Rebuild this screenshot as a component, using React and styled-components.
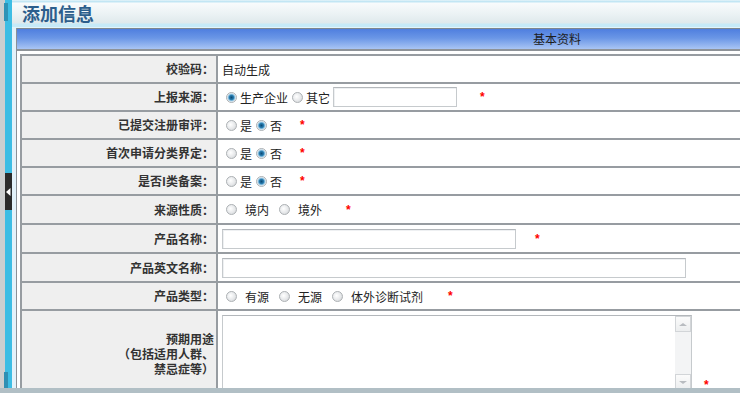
import React from 'react';
import styled, { createGlobalStyle } from 'styled-components';

const GlobalStyle = createGlobalStyle`
  html, body {
    margin: 0;
    padding: 0;
    overflow: hidden;
    background: #ffffff;
  }
  body {
    font-family: "Noto Sans CJK SC", "Liberation Sans", sans-serif;
    font-size: 12px;
    color: #222222;
  }
`;

const Frame = styled.div`
  display: flex;
  flex-direction: column;
  width: 740px;
  height: 393px;
  overflow: hidden;
`;

const Workspace = styled.div`
  flex: 1;
  display: flex;
  min-height: 0;
  overflow: hidden;
`;

const SideRail = styled.div`
  flex: none;
  width: 12px;
  display: flex;
  flex-direction: column;
  align-items: flex-end;
  background:
    linear-gradient(#2f93b6, #2f93b6) 4px 3px / 4px 18px no-repeat,
    linear-gradient(#2f8fb3, #2f8fb3) 4px 372px / 4px 16px no-repeat,
    linear-gradient(to right, #cdcfd0 0 5px, #3dbde4 5px 12px);
`;

const RailToggle = styled.button`
  margin-top: 173px;
  width: 7px;
  height: 37px;
  padding: 0;
  border: none;
  background: #2b2b2b;
  display: flex;
  align-items: center;
  justify-content: center;
  cursor: pointer;
`;

const Main = styled.div`
  flex: none;
  width: 1085px;
  display: flex;
  flex-direction: column;
`;

const TitleBar = styled.div`
  height: 28px;
  flex: none;
  display: flex;
  align-items: center;
  padding: 0 0 2px 10px;
  box-sizing: border-box;
  background: linear-gradient(
    to bottom,
    #f2f9fb 0,
    #c2e6f4 1px,
    #c2e6f4 2px,
    #f8fbfc 3px,
    #ebf2f4 14px,
    #dfe9ec 23px,
    #c6eaf8 24px,
    #c6eaf8 27px,
    #ffffff 28px
  );
`;

const Title = styled.h1`
  margin: 0;
  font-size: 18px;
  font-weight: bold;
  color: #2c5e8c;
  line-height: 20px;
`;

const Content = styled.div`
  flex: 1;
  border-left: 4px solid #e3f2fa;
  min-height: 0;
`;

const Panel = styled.div`
  border-left: 1px solid #8b9197;
  height: 100%;
  background: #ffffff;
`;

const SectionBar = styled.div`
  height: 20px;
  border-top: 1px solid #7f878e;
  border-bottom: 2px solid #8e9398;
  background: linear-gradient(to bottom, #4f7fdf 0, #6a96e6 45%, #a9c5f4 100%);
  text-align: center;
  line-height: 20px;
  font-size: 12px;
  color: #1c1c1c;
`;

const FormTable = styled.table`
  margin: 3px 0 0 3px;
  width: calc(100% - 3px);
  border-collapse: collapse;
  border: 2px solid #979ca1;
`;

const Row = styled.tr`
  height: ${(p) => p.$height || 28}px;
`;

const LabelCell = styled.td`
  width: 192px;
  padding: 0 2px 0 0;
  border: 2px solid #979ca1;
  background: #efefef;
  text-align: right;
  font-weight: bold;
  color: #333333;
  line-height: ${(p) => (p.$tall ? 15 : 14)}px;
  vertical-align: middle;
`;

const ValueCell = styled.td`
  padding: ${(p) => (p.$tall ? '4px 4px 0' : '0 4px')};
  border: 2px solid #979ca1;
  background: #ffffff;
  vertical-align: ${(p) => (p.$tall ? 'top' : 'middle')};
  white-space: nowrap;
`;

const Line = styled.div`
  display: flex;
  align-items: ${(p) => (p.$bottom ? 'flex-end' : 'center')};
`;

const Choice = styled.label`
  display: inline-flex;
  align-items: center;
  gap: ${(p) => (p.$spaced ? 8 : 3)}px;
  margin-right: ${(p) => (p.$spaced ? 6 : 0)}px;
  color: #222222;
`;

const Radio = styled.span`
  display: inline-block;
  width: 11px;
  height: 11px;
  margin-left: 4px;
  box-sizing: border-box;
  border-radius: 50%;
  border: 1px solid #aeb2b5;
  background: ${(p) =>
    p.$checked
      ? 'radial-gradient(circle at 50% 50%, #0d4a74 0, #2a7db0 2.2px, #8fc3e2 3.3px, #eef1f3 4.4px)'
      : 'radial-gradient(circle at 40% 40%, #ffffff 0, #e6e8ea 55%, #c9ccce 100%)'};
`;

const TextInput = styled.input`
  width: ${(p) => p.$width}px;
  height: 20px;
  margin-left: ${(p) => p.$offset || 0}px;
  box-sizing: border-box;
  border: 1px solid #c6cacd;
  border-top-color: #b3b7bb;
  box-shadow: inset 1px 1px 0 #eef0f2;
  background: #ffffff;
  padding: 0 3px;
  font: inherit;
`;

const Star = styled.span`
  margin-left: ${(p) => p.$gap}px;
  color: #ff0000;
  font-family: "Liberation Sans", sans-serif;
  font-size: 12px;
  font-weight: bold;
  line-height: 12px;
  vertical-align: -3px;
`;

const MemoBox = styled.div`
  display: flex;
  width: 470px;
  height: 76px;
  box-sizing: border-box;
  border: 1px solid #c6cacd;
  border-top-color: #b3b7bb;
  background: #ffffff;
`;

const MemoArea = styled.div`
  flex: 1;
`;

const ScrollTrack = styled.div`
  width: 16px;
  display: flex;
  flex-direction: column;
  justify-content: space-between;
  background: #f3f4f5;
`;

const ScrollArrow = styled.div`
  height: 16px;
  box-sizing: border-box;
  border: 1px solid #d2d5d8;
  background: linear-gradient(to bottom, #fbfbfb, #eceeef);
  display: flex;
  align-items: center;
  justify-content: center;
  &::after {
    content: '';
    border-left: 4px solid transparent;
    border-right: 4px solid transparent;
    ${(p) =>
      p.$down
        ? 'border-top: 3px solid #b8bcc0;'
        : 'border-bottom: 3px solid #b8bcc0;'}
  }
`;

const BottomStrip = styled.div`
  flex: none;
  height: 5px;
  background: #b1bfc5;
`;

function Field({ label, children, height, tall }) {
  return (
    <Row $height={height}>
      <LabelCell $tall={tall}>{label}</LabelCell>
      <ValueCell $tall={tall}>{children}</ValueCell>
    </Row>
  );
}

function Option({ label, checked, spaced }) {
  return (
    <Choice $spaced={spaced}>
      <Radio $checked={checked} />
      <span>{label}</span>
    </Choice>
  );
}

function YesNo() {
  return (
    <Line>
      <Option label="是" />
      <Option label="否" checked />
      <Star $gap={18}>*</Star>
    </Line>
  );
}

export default function App() {
  return (
    <>
      <GlobalStyle />
      <Frame>
        <Workspace>
          <SideRail>
            <RailToggle aria-label="collapse">
              <svg width="5" height="8" viewBox="0 0 5 8">
                <path d="M4.5 0 L0 4 L4.5 8 Z" fill="#ffffff" />
              </svg>
            </RailToggle>
          </SideRail>
          <Main>
            <TitleBar>
              <Title>添加信息</Title>
            </TitleBar>
            <Content>
              <Panel>
                <SectionBar>基本资料</SectionBar>
                <FormTable>
                  <tbody>
                    <Field label="校验码：">自动生成</Field>
                    <Field label="上报来源：">
                      <Line>
                        <Option label="生产企业" checked />
                        <Option label="其它" />
                        <TextInput $width={124} $offset={3} />
                        <Star $gap={23}>*</Star>
                      </Line>
                    </Field>
                    <Field label="已提交注册审评：">
                      <YesNo />
                    </Field>
                    <Field label="首次申请分类界定：">
                      <YesNo />
                    </Field>
                    <Field label="是否I类备案：">
                      <YesNo />
                    </Field>
                    <Field label="来源性质：" height={29}>
                      <Line>
                        <Option label="境内" spaced />
                        <Option label="境外" spaced />
                        <Star $gap={18}>*</Star>
                      </Line>
                    </Field>
                    <Field label="产品名称：" height={29}>
                      <Line>
                        <TextInput $width={294} />
                        <Star $gap={19}>*</Star>
                      </Line>
                    </Field>
                    <Field label="产品英文名称：" height={29}>
                      <Line>
                        <TextInput $width={464} />
                      </Line>
                    </Field>
                    <Field label="产品类型：">
                      <Line>
                        <Option label="有源" spaced />
                        <Option label="无源" spaced />
                        <Option label="体外诊断试剂" spaced />
                        <Star $gap={19}>*</Star>
                      </Line>
                    </Field>
                    <Field
                      height={86}
                      tall
                      label={
                        <>
                          预期用途
                          <br />
                          （包括适用人群、
                          <br />
                          禁忌症等）
                        </>
                      }
                    >
                      <Line $bottom>
                        <MemoBox>
                          <MemoArea />
                          <ScrollTrack>
                            <ScrollArrow />
                            <ScrollArrow $down />
                          </ScrollTrack>
                        </MemoBox>
                        <Star $gap={12}>*</Star>
                      </Line>
                    </Field>
                  </tbody>
                </FormTable>
              </Panel>
            </Content>
          </Main>
        </Workspace>
        <BottomStrip />
      </Frame>
    </>
  );
}
